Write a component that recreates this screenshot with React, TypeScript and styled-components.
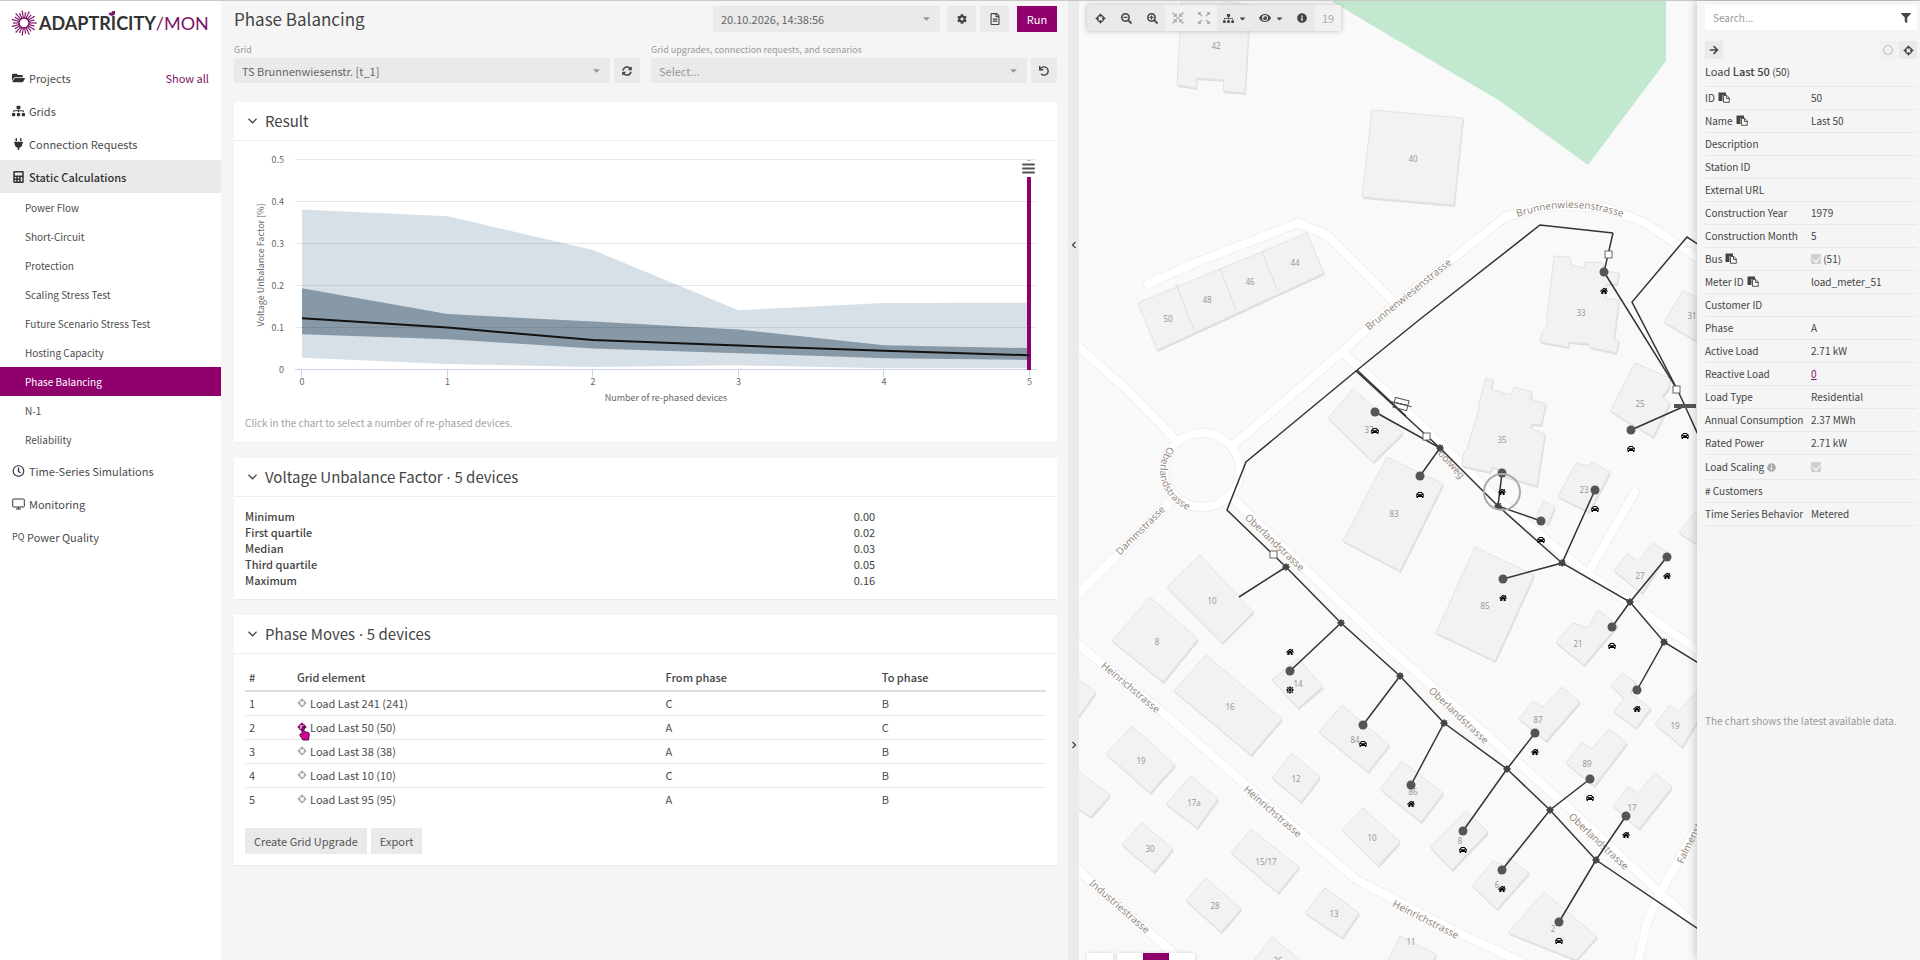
import React from "react";
import styled, { createGlobalStyle, css } from "styled-components";
import {
  FaArrowRight, FaCalculator, FaCar, FaCaretDown, FaCog, FaEye, FaFilter, FaFolderOpen, FaHome,
  FaInfoCircle, FaPlug, FaRegCircle, FaRegClock, FaRegFileAlt, FaSearchMinus, FaSearchPlus, FaSitemap,
  FaSun, FaSyncAlt, FaUndo,
} from "react-icons/fa";

const purple = "#8f006d";
const uiFont = `"Noto Sans CJK SC", "Noto Sans", sans-serif`;
const mapFont = `"Noto Sans", "Open Sans", sans-serif`;

const GlobalStyle = createGlobalStyle`
  * { box-sizing: border-box; }
  body { margin: 0; background: #f5f5f5; color: #444; font: 11px/16px ${uiFont}; }
  button, input, select { font: inherit; color: inherit; border: 0; border-radius: 0; margin: 0; }
  a { text-decoration: none; }
`;

/* ---------- shell ---------- */

const Shell = styled.div`
  display: grid;
  grid-template-columns: 221px minmax(0, 847fr) 11px minmax(0, 618fr) 223px;
  min-height: 100vh;
  border-top: 1px solid #c9c9c9;
`;

const Sidebar = styled.nav`
  background: #fff;
`;

const Brand = styled.a`
  position: relative;
  display: flex;
  align-items: center;
  height: 60px;
  padding: 0 0 16px 11px;
  gap: 2px;
  color: #333;
`;

const BrandName = styled.span`
  font: 700 18px/24px Lato, sans-serif;
`;

const BrandSuffix = styled.span`
  font-weight: 400;
  color: #7d1267;
`;

const BrandLeaf = styled.svg`
  position: absolute;
  left: 107px;
  top: 8px;
`;

const NavList = styled.ul`
  list-style: none;
  margin: 0;
  padding: 0;
`;

const NavRow = styled.li<{ $open?: boolean }>`
  display: flex;
  align-items: center;
  justify-content: space-between;
  height: 33px;
  padding: 0 12px;
  background: ${(p) => (p.$open ? "#eaeaea" : "transparent")};
`;

const NavLink = styled.a<{ $strong?: boolean }>`
  display: flex;
  align-items: center;
  gap: 4px;
  color: ${(p) => (p.$strong ? "#333" : "#4c4c4c")};
  font-weight: ${(p) => (p.$strong ? 500 : 400)};
  svg { width: 13px; height: 12px; color: #333; }
`;

const TextIcon = styled.span`
  font-size: 9px;
  width: 11px;
`;

const AccentLink = styled.a`
  color: #7d1267;
`;

const SubLink = styled.a<{ $active?: boolean }>`
  display: block;
  padding-left: 25px;
  font-size: 10px;
  line-height: 29px;
  color: ${(p) => (p.$active ? "#fff" : "#4c4c4c")};
  background: ${(p) => (p.$active ? purple : "transparent")};
`;

/* ---------- main column ---------- */

const Main = styled.main`
  padding: 5px 11px 16px 13px;
`;

const TitleBar = styled.header`
  display: flex;
  align-items: center;
  height: 26px;
  gap: 4px;
`;

const Title = styled.h1`
  flex: 1;
  margin: 0;
  font-size: 17px;
  line-height: 24px;
  font-weight: 400;
`;

const SelectBox = styled.span<{ $width?: number; $muted?: boolean }>`
  position: relative;
  display: flex;
  flex: ${(p) => (p.$width ? `0 1 ${p.$width}px` : "1")};
  min-width: 0;
  margin-right: ${(p) => (p.$width ? 3 : 0)}px;
  color: ${(p) => (p.$muted ? "#999" : "#666")};
  select {
    appearance: none;
    width: 100%;
    height: ${(p) => (p.$width ? 26 : 25)}px;
    padding: 0 24px 0 8px;
    background: #eaeaea;
  }
  svg { position: absolute; right: 8px; top: 7px; color: #999; pointer-events: none; }
`;

const buttonBase = css`
  display: inline-flex;
  align-items: center;
  justify-content: center;
  padding: 0;
  background: #eaeaea;
  color: #444;
`;

const IconButton = styled.button<{ $w?: number; $h?: number; $quiet?: boolean }>`
  ${buttonBase}
  flex: none;
  width: ${(p) => p.$w ?? 26}px;
  height: ${(p) => p.$h ?? 25}px;
  ${(p) => p.$quiet && css`background: #f1f1f1; color: #bbb;`}
`;

const RunButton = styled.button`
  ${buttonBase}
  width: 40px;
  height: 26px;
  margin-left: 4px;
  background: ${purple};
  color: #fff;
`;

const Filters = styled.div`
  display: grid;
  grid-template-columns: minmax(0, 406fr) minmax(0, 406fr);
  column-gap: 11px;
  margin: 10px 0 19px;
`;

const Field = styled.div``;

const FieldLabel = styled.label`
  display: block;
  font-size: 9px;
  line-height: 16px;
  color: #999;
`;

const FieldRow = styled.div`
  display: flex;
  gap: 4px;
`;

const Panel = styled.section`
  margin-bottom: 15px;
  background: #fff;
  border-bottom: 1px solid #ececec;
`;

const PanelTitle = styled.h2`
  display: flex;
  align-items: center;
  gap: 8px;
  height: 39px;
  margin: 0;
  padding: 0 0 1px 14px;
  border-bottom: 1px solid #ededed;
  font-size: 15px;
  line-height: 20px;
  font-weight: 400;
`;

const MidDot = styled.span`
  font-family: "Noto Sans", sans-serif;
`;

const Hint = styled.p`
  margin: 0;
  padding: 10px 11px 11px;
  font-size: 10px;
  color: #a3a3a3;
`;

const StatTable = styled.table`
  width: 100%;
  padding: 11px;
  border-spacing: 0;
  line-height: 16px;
  th { width: 76%; padding: 0; text-align: left; font-weight: 500; color: #444; }
  td { padding: 0; }
`;

const MovesWrap = styled.div`
  padding: 10px 11px 11px;
`;

const MovesTable = styled.table`
  width: 100%;
  border-collapse: collapse;
  table-layout: fixed;
  th, td { height: 24px; padding: 0 4px; text-align: left; border-bottom: 1px solid #e9e9e9; }
  th { height: 27px; font-weight: 500; border-bottom: 2px solid #ddd; }
  th:first-child { width: 6%; }
  th:nth-child(2) { width: 46%; }
  th:nth-child(3) { width: 27%; }
  tr:last-child td { border-bottom: 0; }
  td { color: #4c4c4c; }
`;

const Element = styled.span<{ $hot?: boolean }>`
  position: relative;
  display: inline-flex;
  align-items: center;
  gap: 3px;
  svg { color: ${(p) => (p.$hot ? purple : "#aaa")}; }
`;

const Pointer = styled.svg`
  position: absolute;
  left: 2px;
  top: 6px;
`;

const Actions = styled.div`
  display: flex;
  gap: 4px;
  margin-top: 17px;
`;

const TextButton = styled.button`
  ${buttonBase}
  height: 26px;
  padding: 0 9px;
  color: #555;
`;

/* ---------- splitter and map ---------- */

const Splitter = styled.div`
  display: flex;
  flex-direction: column;
  justify-content: space-between;
  align-items: center;
  padding: 25vh 0 22vh;
  background: #ebebeb;
`;

const SplitButton = styled.button`
  display: flex;
  padding: 0;
  background: none;
`;

const MapArea = styled.section`
  position: relative;
  overflow: hidden;
  background: #f9f9f9;
`;

const MapCanvas = styled.svg`
  position: absolute;
  inset: 0;
  width: 100%;
  height: 100%;
  font-family: ${mapFont};
`;

const MapTools = styled.div`
  position: absolute;
  left: 8px;
  top: 4px;
  display: flex;
  box-shadow: 0 0 5px rgba(0, 0, 0, 0.25);
`;

const ToolButton = styled.button<{ $wide?: boolean }>`
  ${buttonBase}
  gap: 4px;
  width: ${(p) => (p.$wide ? 36 : 26)}px;
  height: 26px;
  background: #e9e9e9;
  &:disabled { background: #f1f1f1; color: #aaa; }
`;

const ZoomLevel = styled.span`
  ${buttonBase}
  width: 26px;
  background: #f1f1f1;
  color: #aaa;
`;

const LayerTools = styled.div`
  position: absolute;
  left: 8px;
  bottom: -19px;
  display: flex;
`;

const LayerButton = styled.button<{ $on?: boolean; $apart?: boolean }>`
  width: 26px;
  height: 26px;
  margin-right: ${(p) => (p.$apart ? 4 : 0)}px;
  background: ${(p) => (p.$on ? purple : "#fff")};
  box-shadow: 0 0 4px rgba(0, 0, 0, 0.15);
`;

/* ---------- detail column ---------- */

const Details = styled.aside`
  position: relative;
  padding: 4px 3px 12px 8px;
  background: #f5f5f5;
  box-shadow: -1px 0 9px rgba(0, 0, 0, 0.22);
`;

const SearchBox = styled.div`
  display: flex;
  align-items: center;
  height: 25px;
  padding: 0 6px 0 8px;
  background: #fff;
  input { flex: 1; min-width: 0; padding: 0; background: none; outline: 0; font-size: 10px; }
  input::placeholder { color: #999; opacity: 1; }
`;

const DetailTools = styled.div`
  display: flex;
  gap: 2px;
  margin: 11px 0 2px;
  button:first-child { margin-right: auto; }
`;

const DetailTitle = styled.h3`
  margin: 0;
  font-size: 11px;
  line-height: 20px;
  font-weight: 400;
  b { font-weight: 500; }
  small { font-size: 10px; }
`;

const DetailTable = styled.table`
  width: 100%;
  margin-top: 4px;
  border-collapse: collapse;
  font-size: 10px;
  line-height: 14px;
  th, td {
    padding: 0;
    border-top: 1px solid #e9e9e9;
    text-align: left;
    font-weight: 400;
    white-space: nowrap;
  }
  th { width: 106px; }
  tr:last-child > * { border-bottom: 1px solid #e9e9e9; }
  svg { margin-left: 3px; vertical-align: -1px; }
`;

const DetailRow = styled.tr<{ $tall?: boolean }>`
  && > * { height: ${(p) => (p.$tall ? 25 : 23)}px; }
`;

const Check = styled.input`
  appearance: none;
  width: 10px;
  height: 10px;
  vertical-align: -1px;
  border-radius: 1px;
  background: #cfcfcf;
  position: relative;
  &::after {
    content: "";
    position: absolute;
    left: 3px;
    top: 1px;
    width: 4px;
    height: 6px;
    border: solid #fff;
    border-width: 0 1px 1px 0;
    rotate: 40deg;
  }
`;

const Note = styled.p`
  margin: 187px 0 0;
  font-size: 10px;
  color: #999;
`;

/* ---------- small drawings ---------- */

const Locate = ({ size = 12 }: { size?: number }) => (
  <svg width={size} height={size} viewBox="0 0 12 12" aria-hidden="true">
    <circle cx="6" cy="6" r="3.5" fill="none" stroke="currentColor" strokeWidth="1.4" strokeDasharray="3.5 2" strokeDashoffset="-1" />
    <path
      d="M6 0.2L8 2.800L6.600 4.200H5.400L4 2.800ZM6 11.800L8 9.200L6.600 7.800H5.400L4 9.200ZM0.200 6L2.800 4L4.200 5.400V6.600L2.800 8ZM11.800 6L9.200 4L7.800 5.400V6.600L9.200 8Z"
      fill="currentColor"
    />
  </svg>
);

const Copy = () => (
  <svg width="12" height="11" viewBox="0 0 12 11" aria-hidden="true">
    <path d="M0.500 0.500H8V3H4.500V9H0.500Z" fill="#444" />
    <path d="M5.500 3.500H9L11.300 6V10.300H5.500ZM8.500 3.500V6.500H11.300" fill="#f5f5f5" stroke="#444" strokeWidth="0.9" />
  </svg>
);

const Screen = () => (
  <svg viewBox="0 0 13 12" fill="none" stroke="currentColor" aria-hidden="true">
    <rect x="0.700" y="1" width="11.600" height="8" rx="0.800" />
    <path d="M4 11h5M6.500 9v2" />
  </svg>
);

const Chevron = () => (
  <svg width="9" height="6" viewBox="0 0 9 6" fill="none" stroke="#444" strokeWidth="1.3" aria-hidden="true">
    <path d="M0.500 0.800L4.500 4.800L8.500 0.800" />
  </svg>
);

const Arrows = ({ out }: { out?: boolean }) => (
  <svg width="12" height="12" viewBox="0 0 12 12" fill="none" stroke="currentColor" strokeWidth="1.3" aria-hidden="true">
    <path d="M0.500 0.500L4 4M11.500 0.500L8 4M0.500 11.500L4 8M11.500 11.500L8 8" />
    {out
      ? <path d="M0.600 3V0.600H3M9 0.600h2.400V3M0.600 9v2.400H3M9 11.400h2.400V9" />
      : <path d="M1.500 4.200h2.700V1.500M7.800 1.500v2.700h2.700M1.500 7.800h2.700v2.700M7.800 10.500V7.800h2.700M4.500 6h3" />}
  </svg>
);

const Burst = () => {
  const rays = Array.from({ length: 22 }, (_, i) => (i * Math.PI * 2) / 22);
  return (
    <svg width="26" height="26" viewBox="-13 -13 26 26" aria-hidden="true">
      {rays.map((a, i) => {
        const far = i % 2 ? 10.2 : 12;
        return (
          <g key={i} stroke="#7d1267" fill="#7d1267">
            <line x1={Math.cos(a) * 5} y1={Math.sin(a) * 5} x2={Math.cos(a) * far} y2={Math.sin(a) * far} strokeWidth="1.1" />
            <circle cx={Math.cos(a) * far} cy={Math.sin(a) * far} r="0.7" stroke="none" />
            <circle cx={Math.cos(a) * 5} cy={Math.sin(a) * 5} r="0.9" stroke="none" />
          </g>
        );
      })}
    </svg>
  );
};

/* ---------- chart ---------- */

const px = (i: number) => 68 + i * 145.5;
const py = (v: number) => 229 - v * 421;
const median = [0.123, 0.101, 0.071, 0.058, 0.046, 0.035];
const bands = [
  { fill: "#d8e0e7", top: [0.381, 0.365, 0.285, 0.142, 0.159, 0.16], bottom: [0.029, 0.014, 0.007, 0.011, 0.004, 0.004] },
  { fill: "#8799a7", top: [0.194, 0.133, 0.115, 0.096, 0.059, 0.052], bottom: [0.085, 0.073, 0.051, 0.04, 0.028, 0.024] },
];

const ChartSvg = styled.svg`
  display: block;
  width: 100%;
  height: auto;
  font-size: 9px;
  fill: #666;
`;

const Chart = () => (
  <ChartSvg viewBox="0 0 823 264" role="img" aria-label="Voltage unbalance factor by number of re-phased devices">
    {bands.map((b) => (
      <polygon
        key={b.fill}
        fill={b.fill}
        points={[...b.top.map((v, i) => `${px(i)},${py(v)}`), ...b.bottom.map((v, i) => `${px(i)},${py(v)}`).reverse()].join(" ")}
      />
    ))}
    {[0, 0.1, 0.2, 0.3, 0.4, 0.5].map((v) => (
      <g key={v}>
        <rect x="61" y={Math.round(py(v)) - 1} width="742" height="1" fill={v ? "#000" : "#ccd6eb"} opacity={v ? 0.09 : 1} />
        <text x="50" y={py(v) + 3} textAnchor="end">{v}</text>
      </g>
    ))}
    {median.map((_, i) => (
      <g key={i}>
        <rect x={Math.round(px(i)) - 1} y="229" width="1" height="7" fill="#ccd6eb" />
        <text x={px(i)} y="244" textAnchor="middle">{i}</text>
      </g>
    ))}
    <rect x="793" y="36" width="4" height="193" fill={purple} />
    <rect x="793" y="19" width="4" height="1" fill="#d9a5c9" />
    <polyline fill="none" stroke="#111" strokeWidth="2" points={median.map((v, i) => `${px(i)},${py(v)}`).join(" ")} />
    <path d="M789 23.500h11M789 27.500h11M789 31.500h11" stroke="#555" strokeWidth="2" strokeLinecap="round" />
    <text x="432" y="260" textAnchor="middle">Number of re-phased devices</text>
    <text transform="translate(30 124) rotate(-90)" textAnchor="middle">Voltage Unbalance Factor [%]</text>
  </ChartSvg>
);

/* ---------- map data ---------- */

const roads = [
  "1148,284 1190,265 1298,223 1327,235 1392,300",
  "1232,446 1342,352 1380,317 1450,261 1505,217 1530,210 1557,205 1607,208 1645,223 1698,258",
  "1342,352 1390,395 1440,443 1498,500 1587,573 1630,603 1680,638 1710,658",
  "1635,492 1588,573",
  "1070,339 1125,388 1178,442",
  "1172,500 1070,602",
  "1232,497 1303,567 1380,640 1513,758 1593,830 1657,890 1710,938",
  "1636,970 1647,923 1658,897 1702,818",
  "1070,638 1160,710 1300,832 1357,880 1390,897 1457,932 1530,966",
  "1070,863 1147,930 1195,972",
];

const buildings = [
  "1182,-5 1250,5 1245,93 1223,91 1224,80 1197,78 1196,88 1177,85",
  "1372,110 1463,118 1454,205 1362,197",
  "1138,303 1307,233 1324,273 1157,350",
  "1353,389 1403,433 1373,462 1328,418",
  "1387,457 1443,484 1400,571 1343,541",
  "1486,378 1493,380 1491,389 1511,395 1514,387 1532,392 1530,399 1546,404 1541,425 1532,424 1530,428 1545,434 1537,486 1503,476 1505,471 1492,467 1490,472 1462,466 1463,454 1467,449 1479,408 1478,407",
  "1554,256 1570,257 1571,265 1584,268 1585,262 1603,263 1604,271 1619,273 1617,284 1606,284 1605,298 1619,300 1614,340 1619,341 1616,353 1589,347 1589,344 1569,342 1568,347 1540,342 1542,332 1547,325 1547,317 1551,283",
  "1683,291 1710,303 1710,349 1664,322",
  "1635,363 1670,378 1669,388 1662,397 1670,403 1653,437 1610,411",
  "1576,463 1589,466 1592,462 1610,472 1589,512 1558,497",
  "1544,501 1555,507 1548,524 1536,517",
  "1627,554 1638,561 1653,543 1668,552 1642,593 1614,571",
  "1475,547 1534,575 1495,661 1436,633",
  "1598,610 1618,625 1584,665 1556,643 1573,623 1588,628",
  "1695,512 1710,520 1710,552 1679,533",
  "1622,673 1636,682 1630,693 1651,708 1636,728 1614,712 1624,698 1611,686",
  "1670,705 1678,712 1697,691 1710,700 1682,747 1655,724",
  "1562,687 1580,702 1546,741 1519,719 1533,701 1543,707",
  "1609,729 1627,743 1594,786 1566,763 1582,743 1592,749",
  "1655,773 1672,787 1639,829 1613,806 1628,787 1638,793",
  "1402,761 1443,793 1421,822 1380,789",
  "1466,811 1488,832 1452,870 1430,847",
  "1493,861 1505,866 1509,858 1529,873 1497,909 1472,886",
  "1544,892 1597,937 1576,960 1508,933",
  "1400,936 1436,954 1430,970 1384,970",
  "1342,705 1389,745 1368,772 1319,732",
  "1363,808 1400,842 1378,866 1342,830",
  "1206,655 1282,719 1251,755 1174,691",
  "1298,658 1323,687 1298,708 1272,680",
  "1200,555 1253,612 1222,643 1167,587",
  "1150,597 1198,639 1163,682 1112,641",
  "1070,673 1096,692 1070,728",
  "1132,726 1175,765 1150,793 1106,754",
  "1191,776 1218,799 1197,828 1166,804",
  "1292,753 1320,777 1301,802 1272,778",
  "1070,765 1110,795 1091,817 1070,804",
  "1142,823 1173,849 1154,872 1122,845",
  "1251,829 1299,867 1278,893 1231,853",
  "1206,878 1241,909 1221,932 1186,901",
  "1325,888 1359,913 1342,938 1305,913",
  "1272,937 1300,960 1290,975 1254,960",
];

const houseNumbers: [string, number, number][] = [
  ["42", 1216, 46], ["40", 1413, 159], ["50", 1168, 319], ["48", 1207, 300], ["46", 1250, 282], ["44", 1295, 263],
  ["37", 1369, 430], ["83", 1394, 514], ["35", 1502, 440], ["33", 1581, 313], ["31", 1692, 316], ["25", 1640, 404],
  ["23", 1584, 490], ["27", 1640, 576], ["85", 1485, 606], ["21", 1578, 644], ["19", 1675, 726], ["87", 1538, 720],
  ["89", 1587, 764], ["17", 1632, 808], ["86", 1413, 792], ["8", 1460, 841], ["6", 1497, 885], ["2", 1553, 929],
  ["11", 1411, 942], ["84", 1355, 740], ["10", 1372, 838], ["16", 1230, 707], ["14", 1298, 684], ["10", 1212, 601],
  ["8", 1157, 642], ["19", 1141, 761], ["17a", 1194, 803], ["12", 1296, 779], ["30", 1150, 849], ["15/17", 1266, 862],
  ["28", 1215, 906], ["13", 1334, 914], ["26", 1278, 961],
];

const streetNames: [string, number, number, number][] = [
  ["Brunnenwiesenstrasse", 1408, 294, -39], ["Dammstrasse", 1140, 530, -45], ["Oberlandstrasse", 1275, 542, 43.5],
  ["Heinrichstrasse", 1131, 687, 40], ["Heinrichstrasse", 1273, 811, 41], ["Industriestrasse", 1120, 906, 41],
  ["Heinrichstrasse", 1426, 919, 27], ["Oberlandstrasse", 1459, 715, 43], ["Oberlandstrasse", 1599, 841, 43],
  ["lbolweg", 1451, 463, 48], ["Falmenstrasse", 1694, 832, -64],
];

const cables = [
  "1613,233 1540,225 1419,320 1356,371 1246,462 1227,510 1286,567 1341,623 1400,676 1444,723 1507,769 1550,810 1596,860 1710,937",
  "1613,233 1604,272 1677,389 1685,406 1710,461",
  "1710,252 1687,237 1632,302 1677,389",
  "1356,371 1427,436 1440,448 1498,506 1562,563 1630,602 1664,642 1710,670",
  "1357,370 1406,416", "1286,567 1239,597", "1341,623 1290,671", "1400,676 1363,725", "1444,723 1411,785",
  "1535,733 1507,769 1463,831", "1590,779 1550,810 1502,870", "1626,816 1596,860 1559,922", "1664,642 1637,690",
  "1667,557 1630,602 1612,627", "1595,490 1562,563 1503,579", "1502,473 1498,506 1541,521",
  "1375,412 1440,448 1420,476", "1685,406 1631,430",
];

const joints = [
  [1286, 567], [1341, 623], [1400, 676], [1444, 723], [1507, 769], [1550, 810], [1596, 860], [1440, 448], [1498, 506],
  [1562, 563], [1630, 602], [1664, 642],
];

const loads = [
  [1604, 272], [1290, 671], [1363, 725], [1411, 785], [1535, 733], [1463, 831], [1590, 779], [1502, 870], [1626, 816],
  [1559, 922], [1637, 690], [1667, 557], [1612, 627], [1595, 490], [1503, 579], [1502, 473], [1541, 521], [1375, 412],
  [1420, 476], [1631, 430],
];

const fuses = [[1608, 254], [1426, 436], [1676, 389], [1273, 554]];

const cars = [
  [1375, 431], [1420, 495], [1541, 540], [1595, 509], [1631, 449], [1685, 436], [1612, 646], [1363, 744], [1463, 850],
  [1590, 798], [1559, 941],
];

const homes = [
  [1604, 291], [1502, 492], [1503, 598], [1667, 576], [1637, 709], [1411, 804], [1535, 752], [1626, 835], [1502, 889],
  [1290, 652],
];

const GridMap = () => (
  <MapCanvas role="img" aria-label="Grid map">
    <g transform="translate(-1079 -1)">
      <polygon points="1330,0 1390,36 1500,101 1588,165 1666,61 1666,0" fill="#c2e8cf" />
      <g fill="none" stroke="#efefef" strokeWidth="10" strokeLinecap="round" strokeLinejoin="round">
        {roads.map((r) => <polyline key={r} points={r} />)}
        <ellipse cx="1202" cy="470" rx="38" ry="37" />
      </g>
      <g fill="none" stroke="#fff" strokeWidth="8" strokeLinecap="round" strokeLinejoin="round">
        {roads.map((r) => <polyline key={r} points={r} />)}
        <ellipse cx="1202" cy="470" rx="38" ry="37" />
      </g>
      {buildings.map((b) => (
        <g key={b}>
          <polygon points={b} fill="#dfdfdf" transform="translate(1 2)" />
          <polygon points={b} fill="#f2f2f2" stroke="#e3e3e3" strokeWidth="1" />
        </g>
      ))}
      <path d="M1176 284L1194 330M1220 268L1236 310M1262 252L1278 291" stroke="#dedede" />
      <g fontSize="8" fill="#999" textAnchor="middle">
        {houseNumbers.map(([t, x, y]) => <text key={`${x}-${y}`} x={x} y={y + 3}>{t}</text>)}
      </g>
      <g fontSize="10" fill="#94887e" stroke="#fff" strokeWidth="2" strokeLinejoin="round" paintOrder="stroke" textAnchor="middle">
        {streetNames.map(([t, x, y, a]) => (
          <text key={`${x}-${y}`} transform={`translate(${x} ${y}) rotate(${a})`} y="4">{t}</text>
        ))}
        <path id="arc-north" d="M1518 217Q1570 199 1622 217" fill="none" stroke="none" />
        <path id="arc-round" d="M1170 444Q1157 462 1161 480Q1168 502 1190 511" fill="none" stroke="none" />
        <text><textPath href="#arc-north" startOffset="50%">Brunnenwiesenstrasse</textPath></text>
        <text><textPath href="#arc-round" startOffset="50%">Oberlandstrasse</textPath></text>
      </g>
      <g fill="none" stroke="#333" strokeWidth="1.5">
        {cables.map((c) => <polyline key={c} points={c} />)}
      </g>
      <rect x="1674" y="404" width="22" height="4" fill="#555" />
      <g fill="none" stroke="#555" transform="translate(1401 404) rotate(14)">
        <rect x="-7" y="-5" width="14" height="5" />
        <rect x="-7" y="0" width="14" height="5" />
        <path d="M-11 0h22" />
      </g>
      {joints.map(([x, y]) => (
        <g key={`${x}-${y}`} transform={`translate(${x} ${y})`}>
          <circle r="3" fill="#444" />
          <path d="M-4 0h8M0 -4v8M-3 -3l6 6M3 -3l-6 6" stroke="#444" />
        </g>
      ))}
      {loads.map(([x, y]) => <circle key={`${x}-${y}`} cx={x} cy={y} r="4.500" fill="#555" />)}
      {fuses.map(([x, y]) => (
        <rect key={`${x}-${y}`} x={x - 3} y={y - 3} width="7" height="7" fill="#fff" stroke="#666" />
      ))}
      <circle cx="1502" cy="492" r="18" fill="none" stroke="#aaa" strokeWidth="2" />
      {cars.map(([x, y]) => <FaCar key={`${x}-${y}`} x={x - 4} y={y - 4} size={8} color="#000" />)}
      {homes.map(([x, y]) => <FaHome key={`${x}-${y}`} x={x - 4} y={y - 4} size={8} color="#000" />)}
      <FaSun x={1286} y={686} size={8} color="#000" />
    </g>
  </MapCanvas>
);

/* ---------- content ---------- */

const subItems = [
  "Power Flow", "Short-Circuit", "Protection", "Scaling Stress Test", "Future Scenario Stress Test", "Hosting Capacity",
  "Phase Balancing", "N-1", "Reliability",
];

const stats = [["Minimum", "0.00"], ["First quartile", "0.02"], ["Median", "0.03"], ["Third quartile", "0.05"], ["Maximum", "0.16"]];

const moves = [
  ["Load Last 241 (241)", "C", "B"], ["Load Last 50 (50)", "A", "C"], ["Load Last 38 (38)", "A", "B"],
  ["Load Last 10 (10)", "C", "B"], ["Load Last 95 (95)", "A", "B"],
];

const details: { name: string; value?: React.ReactNode; copy?: boolean; info?: boolean }[] = [
  { name: "ID", value: "50", copy: true },
  { name: "Name", value: "Last 50", copy: true },
  { name: "Description" },
  { name: "Station ID" },
  { name: "External URL" },
  { name: "Construction Year", value: "1979" },
  { name: "Construction Month", value: "5" },
  { name: "Bus", value: <><Check type="checkbox" checked disabled readOnly aria-label="Bus" /> (51)</>, copy: true },
  { name: "Meter ID", value: "load_meter_51", copy: true },
  { name: "Customer ID" },
  { name: "Phase", value: "A" },
  { name: "Active Load", value: "2.71 kW" },
  { name: "Reactive Load", value: <AccentLink href="#reactive"><u>0</u></AccentLink> },
  { name: "Load Type", value: "Residential" },
  { name: "Annual Consumption", value: "2.37 MWh" },
  { name: "Rated Power", value: "2.71 kW" },
  { name: "Load Scaling", value: <Check type="checkbox" checked disabled readOnly aria-label="Load Scaling" />, info: true },
  { name: "# Customers" },
  { name: "Time Series Behavior", value: "Metered" },
];

const Nav = ({ icon, label, open, extra }: { icon: React.ReactNode; label: string; open?: boolean; extra?: React.ReactNode }) => (
  <NavRow $open={open}>
    <NavLink href="#" $strong={open}>{icon}{label}</NavLink>
    {extra}
  </NavRow>
);

const PanelHead = ({ title, count }: { title: string; count?: string }) => (
  <PanelTitle>
    <Chevron />
    <span>{title}{count && <><MidDot> · </MidDot>{count}</>}</span>
  </PanelTitle>
);

export default function App() {
  return (
    <Shell>
      <GlobalStyle />
      <Sidebar>
        <Brand href="#" aria-label="Adaptricity Mon">
          <Burst />
          <BrandName>ADAPTRICITY<BrandSuffix>/MON</BrandSuffix></BrandName>
          <BrandLeaf width="9" height="9" viewBox="0 0 9 9" aria-hidden="true">
            <path d="M1.500 3.500A3.500 3.500 0 0 0 8 5V2H5.500L4 4Z" fill="#7d1267" />
          </BrandLeaf>
        </Brand>
        <NavList>
          <Nav icon={<FaFolderOpen />} label="Projects" extra={<AccentLink href="#all">Show all</AccentLink>} />
          <Nav icon={<FaSitemap />} label="Grids" />
          <Nav icon={<FaPlug />} label="Connection Requests" />
          <Nav icon={<FaCalculator />} label="Static Calculations" open />
          <li>
            <NavList>
              {subItems.map((s) => (
                <li key={s}><SubLink href="#" $active={s === "Phase Balancing"}>{s}</SubLink></li>
              ))}
            </NavList>
          </li>
          <Nav icon={<FaRegClock />} label="Time-Series Simulations" />
          <Nav icon={<Screen />} label="Monitoring" />
          <Nav icon={<TextIcon>PQ</TextIcon>} label="Power Quality" />
        </NavList>
      </Sidebar>

      <Main>
        <TitleBar>
          <Title>Phase Balancing</Title>
          <SelectBox $width={227}>
            <select aria-label="Calculation time"><option>20.10.2026, 14:38:56</option></select>
            <FaCaretDown size={11} />
          </SelectBox>
          <IconButton $w={29} $h={26} aria-label="Settings"><FaCog size={10} /></IconButton>
          <IconButton $w={29} $h={26} aria-label="Report"><FaRegFileAlt size={12} /></IconButton>
          <RunButton>Run</RunButton>
        </TitleBar>
        <Filters>
          <Field>
            <FieldLabel htmlFor="grid">Grid</FieldLabel>
            <FieldRow>
              <SelectBox><select id="grid"><option>TS Brunnenwiesenstr. [t_1]</option></select><FaCaretDown size={11} /></SelectBox>
              <IconButton aria-label="Reload"><FaSyncAlt size={10} /></IconButton>
            </FieldRow>
          </Field>
          <Field>
            <FieldLabel htmlFor="scenario">Grid upgrades, connection requests, and scenarios</FieldLabel>
            <FieldRow>
              <SelectBox $muted><select id="scenario"><option>Select...</option></select><FaCaretDown size={11} /></SelectBox>
              <IconButton aria-label="Reset"><FaUndo size={10} /></IconButton>
            </FieldRow>
          </Field>
        </Filters>

        <Panel>
          <PanelHead title="Result" />
          <Chart />
          <Hint>Click in the chart to select a number of re-phased devices.</Hint>
        </Panel>

        <Panel>
          <PanelHead title="Voltage Unbalance Factor" count="5 devices" />
          <StatTable>
            <tbody>
              {stats.map(([k, v]) => <tr key={k}><th scope="row">{k}</th><td>{v}</td></tr>)}
            </tbody>
          </StatTable>
        </Panel>

        <Panel>
          <PanelHead title="Phase Moves" count="5 devices" />
          <MovesWrap>
            <MovesTable>
              <thead><tr><th>#</th><th>Grid element</th><th>From phase</th><th>To phase</th></tr></thead>
              <tbody>
                {moves.map(([name, from, to], i) => (
                  <tr key={name}>
                    <td>{i + 1}</td>
                    <td>
                      <Element $hot={i === 1}>
                        <Locate size={10} />{name}
                        {i === 1 && (
                          <Pointer width="11" height="16" viewBox="0 0 11 16" aria-hidden="true">
                            <path d="M3 1.500Q4 0.500 5 1.500V6.500L9.500 7.500Q10.500 8 10.300 9.500L9.500 15H4L1 10.500Q0.300 9 1.500 8.700L3 9.500Z" fill="#d6009f" stroke="#3a0a2c" strokeWidth="0.900" />
                          </Pointer>
                        )}
                      </Element>
                    </td>
                    <td>{from}</td>
                    <td>{to}</td>
                  </tr>
                ))}
              </tbody>
            </MovesTable>
            <Actions>
              <TextButton>Create Grid Upgrade</TextButton>
              <TextButton>Export</TextButton>
            </Actions>
          </MovesWrap>
        </Panel>
      </Main>

      <Splitter>
        <SplitButton aria-label="Collapse left">
          <svg width="6" height="8" viewBox="0 0 6 8" fill="none" stroke="#444" strokeWidth="1.300"><path d="M4.500 1L1.500 4L4.500 7" /></svg>
        </SplitButton>
        <SplitButton aria-label="Collapse right">
          <svg width="6" height="8" viewBox="0 0 6 8" fill="none" stroke="#444" strokeWidth="1.300"><path d="M1.500 1L4.500 4L1.500 7" /></svg>
        </SplitButton>
      </Splitter>

      <MapArea>
        <GridMap />
        <MapTools>
          <ToolButton aria-label="Center"><Locate size={11} /></ToolButton>
          <ToolButton aria-label="Zoom out"><FaSearchMinus size={11} /></ToolButton>
          <ToolButton aria-label="Zoom in"><FaSearchPlus size={11} /></ToolButton>
          <ToolButton disabled aria-label="Shrink"><Arrows /></ToolButton>
          <ToolButton disabled aria-label="Expand"><Arrows out /></ToolButton>
          <ToolButton $wide aria-label="Grid layers"><FaSitemap size={11} /><FaCaretDown size={9} /></ToolButton>
          <ToolButton $wide aria-label="Visibility"><FaEye size={12} /><FaCaretDown size={9} /></ToolButton>
          <ToolButton aria-label="Information"><FaInfoCircle size={10} /></ToolButton>
          <ZoomLevel>19</ZoomLevel>
        </MapTools>
        <LayerTools>
          <LayerButton $apart aria-label="Base map" />
          <LayerButton aria-label="Layer 1" />
          <LayerButton $on aria-label="Layer 2" />
          <LayerButton aria-label="Layer 3" />
        </LayerTools>
      </MapArea>

      <Details>
        <SearchBox>
          <input type="search" aria-label="Search" placeholder="Search..." />
          <FaFilter size={10} />
        </SearchBox>
        <DetailTools>
          <IconButton $w={18} $h={18} aria-label="Go to"><FaArrowRight size={10} /></IconButton>
          <IconButton $w={18} $h={18} $quiet aria-label="Mark"><FaRegCircle size={10} /></IconButton>
          <IconButton $w={18} $h={18} aria-label="Locate"><Locate size={11} /></IconButton>
        </DetailTools>
        <DetailTitle>Load <b>Last 50</b> <small>(50)</small></DetailTitle>
        <DetailTable>
          <tbody>
            {details.map((d) => (
              <DetailRow key={d.name} $tall={d.info}>
                <th scope="row">
                  {d.name}
                  {d.copy && <Copy />}
                  {d.info && <FaInfoCircle size={9} color="#aaa" />}
                </th>
                <td>{d.value}</td>
              </DetailRow>
            ))}
          </tbody>
        </DetailTable>
        <Note>The chart shows the latest available data.</Note>
      </Details>
    </Shell>
  );
}
